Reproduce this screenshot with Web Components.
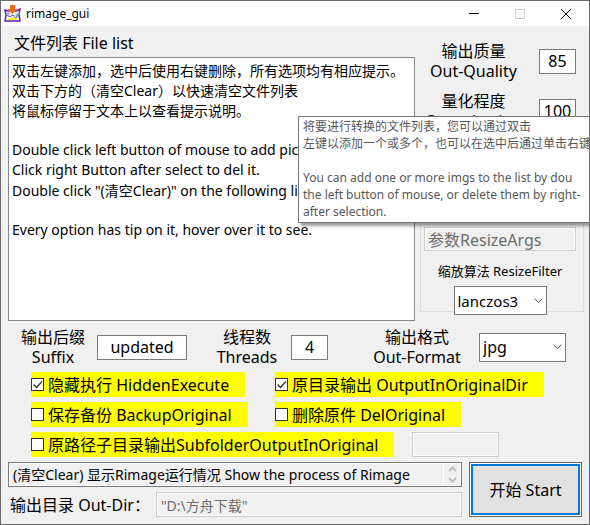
<!DOCTYPE html>
<html lang="zh-CN">
<head>
<meta charset="utf-8">
<title>rimage_gui</title>
<style>
  body {
    margin: 0;
    background: #f0f0f0;
    color: #000;
    font: 16px/20px "Noto Sans", "Noto Sans CJK SC", sans-serif;
  }
</style>
</head>
<body>
<rimage-app></rimage-app>

<script>
const BORDER = "#7a7a7a"
const BORDER_DISABLED = "#cccccc"

const BASE_STYLE = `
  * { box-sizing: border-box; }
  input, select, button {
    margin: 0;
    font: inherit;
    color: inherit;
    border-radius: 0;
    outline: none;
  }
`

class BaseElement extends HTMLElement {
  constructor() {
    super()
    this.attachShadow({ mode: "open" })
  }

  connectedCallback() {
    this.shadowRoot.innerHTML = `<style>${BASE_STYLE}</style>${this.render()}`
  }

  attr(name, defVal = "") {
    return this.hasAttribute(name) ? this.getAttribute(name) : defVal
  }
}

function selectMarkup(el) {
  /* Return a flat drop-down with its chevron laid in the same grid cell. */
  return `
    <style>
      .drop { display: grid; align-items: center; }
      .drop > * { grid-area: 1 / 1; }
      .drop select {
        appearance: none;
        width: ${el.attr("width")}px;
        height: ${el.attr("height", "29")}px;
        padding: 0 3px;
        border: 1px solid ${BORDER};
        background: #fff;
      }
      .drop svg { justify-self: end; margin-right: 4px; pointer-events: none; }
    </style>
    <div class="drop">
      <select id="control">
        ${el.attr("options").split(",").map(o => `<option>${o}</option>`).join("")}
      </select>
      <svg width="9" height="6"><path d="M.5.5l4 4 4-4" fill="none" stroke="#606060"/></svg>
    </div>
  `
}

class AppWindow extends BaseElement {
  render() {
    return `
      <style>
        :host {
          display: flex;
          flex-direction: column;
          position: relative;
          min-height: 100vh;
          box-sizing: border-box;
          border: 1px solid #6b696b;
          overflow: hidden;
        }
        header {
          display: flex;
          align-items: center;
          height: 25px;
          padding-left: 3px;
          background: #fff;
          font-size: 12px;
        }
        h1 { flex: 1; margin: 0 0 0 5px; font: inherit; }
        header button {
          width: 46px;
          height: 25px;
          padding: 0;
          border: 0;
          background: none;
        }
        button svg { display: block; margin: auto; }
        main { flex: 1; padding: 6px 5px 6px 7px; }
      </style>
      <header>
        <svg width="17" height="17" viewBox="0 0 17 17">
          <path d="M1 5l3 1h9l3-2-1 5 1 7H1l1-6z" fill="#fff" stroke="#5a20b8" stroke-width="1.5"/>
          <path d="M2 8l3-2 2 3 4 0 3-3 1 3-2 2H4z" fill="#c9e6f2"/>
          <path d="M3 10l3 2 3-2 3 3 3-4" fill="none" stroke="#6d55d0"/>
          <path d="M3 8l2 1M3 6l3 1" stroke="#e6408f"/>
          <path d="M3 15q2-3 5-2 3-2 6 2z" fill="#f0ee28"/>
          <path d="M13 9v3" stroke="#36a852"/>
          <path d="M6 0h5v4h3L8.500 9 3 4h3z" fill="#ee6a17"/>
        </svg>
        <h1><slot name="title"></slot></h1>
        <button aria-label="Minimize">
          <svg width="10" height="10"><path d="M0 4.500h10" stroke="#000"/></svg>
        </button>
        <button aria-label="Maximize" disabled>
          <svg width="10" height="10"><path d="M.5.5h9v9h-9z" fill="none" stroke="#ccc"/></svg>
        </button>
        <button aria-label="Close">
          <svg width="10" height="10"><path d="M0 0l10 10M10 0L0 10" stroke="#000"/></svg>
        </button>
      </header>
      <main><slot></slot></main>
      <slot name="tip"></slot>
    `
  }
}

class ListBox extends BaseElement {
  render() {
    const options = this.attr("lines")
      .split("|")
      .map(line => `<option>${line}</option>`)
      .join("")
    return `
      <style>
        :host { display: flex; flex-direction: column; }
        label { padding-left: 6px; line-height: 22px; margin-bottom: 3px; }
        select {
          width: 100%;
          height: 264px;
          padding: 2px 2px;
          border: 1px solid #828790;
          background: #fff;
          font-size: 14px;
          overflow: hidden;
        }
        option {
          height: 20px;
          min-height: 20px;
          padding: 0 1px;
          line-height: 20px;
          white-space: pre;
        }
      </style>
      <label for="list"><slot></slot></label>
      <select id="list" size="13" multiple>${options}</select>
    `
  }
}

class FormField extends BaseElement {
  /* A two-line label beside a text box or, with "options", a drop-down. */
  render() {
    const control = this.hasAttribute("options")
      ? selectMarkup(this)
      : `<input id="control" value="${this.attr("value")}">`
    return `
      <style>
        :host { display: flex; align-items: center; gap: 12px; }
        label { width: ${this.attr("label-width", "64")}px; text-align: center; white-space: nowrap; }
        input {
          width: ${this.attr("width")}px;
          height: 25px;
          padding: 0;
          border: 1px solid ${BORDER};
          background: #fff;
          text-align: center;
        }
      </style>
      <label for="control"><slot></slot></label>
      ${control}
    `
  }
}

class ResizeGroup extends BaseElement {
  render() {
    return `
      <style>
        :host { display: block; }
        fieldset {
          display: flex;
          flex-direction: column;
          align-items: center;
          min-width: 0;
          height: 171px;
          margin: 0;
          padding: 85px 7px 0 3px;
          border: 1px solid #dcdcdc;
        }
        input {
          width: 100%;
          height: 25px;
          padding: 0 3px;
          border: 1px solid ${BORDER_DISABLED};
          box-shadow: inset 0 0 0 1px #fff;
          background: #f0f0f0;
          color: #6d6d6d;
        }
        label { margin: 10px 0 5px; font-size: 13px; white-space: nowrap; }
        .drop select { font-size: 15px; }
      </style>
      <fieldset>
        <input value="${this.attr("value")}" aria-label="ResizeArgs" disabled>
        <label for="control"><slot></slot></label>
        ${selectMarkup(this)}
      </fieldset>
    `
  }
}

class CheckOption extends BaseElement {
  render() {
    return `
      <style>
        :host { display: inline-flex; }
        label {
          display: flex;
          align-items: center;
          height: 25px;
          padding-right: 16px;
          background: #ff0;
          white-space: nowrap;
        }
        .box { display: grid; margin-right: 4px; }
        .box > * { grid-area: 1 / 1; }
        input {
          appearance: none;
          width: 13px;
          height: 13px;
          border: 1px solid #333;
          background: #fff;
        }
        svg { display: none; pointer-events: none; }
        input:checked + svg { display: block; }
      </style>
      <label>
        <span class="box">
          <input type="checkbox" ${this.hasAttribute("checked") ? "checked" : ""}>
          <svg width="13" height="13"><path d="M2.500 6.500l3 3 5.500-6" fill="none" stroke="#333" stroke-width="1.300"/></svg>
        </span>
        <slot></slot>
      </label>
    `
  }
}

class OutputPanel extends BaseElement {
  render() {
    return `
      <style>
        :host {
          display: grid;
          grid-template-columns: minmax(0, 1fr) 113px;
          gap: 7px;
        }
        .rows { display: grid; grid-template-columns: minmax(0, 1fr); gap: 5px; }
        .log {
          display: flex;
          height: 25px;
          border: 1px solid ${BORDER};
          box-shadow: inset 0 0 0 1px #fff;
        }
        .log input {
          flex: 1;
          min-width: 0;
          padding: 0 4px;
          border: 0;
          background: none;
          font-size: 14px;
        }
        .spin { display: flex; flex-direction: column; width: 18px; border-left: 1px solid #fff; }
        .spin button { flex: 1; padding: 0; border: 0; background: none; line-height: 0; }
        .dir { display: flex; align-items: center; gap: 6px; padding-left: 2px; }
        .dir label { white-space: nowrap; }
        .dir input {
          flex: 1;
          min-width: 0;
          height: 25px;
          padding: 0 4px;
          border: 1px solid ${BORDER_DISABLED};
          box-shadow: inset 0 0 0 1px #fff;
          background: #f0f0f0;
          color: #6d6d6d;
          font-size: 14px;
        }
        .start {
          border: 1px solid #646464;
          padding: 1px;
          background: #fff;
        }
        .start span {
          display: grid;
          place-content: center;
          height: 100%;
          border: 2px solid #0078d7;
          background: #e1e1e1;
        }
        .start ::slotted(span) { border: 0; }
      </style>
      <div class="rows">
        <div class="log">
          <input value="${this.attr("log")}" aria-label="Log" readonly>
          <div class="spin">
            <button aria-label="Up"><svg width="9" height="6"><path d="M1 5l3.500-3.500L8 5" fill="none" stroke="#bfbfbf" stroke-width="2"/></svg></button>
            <button aria-label="Down"><svg width="9" height="6"><path d="M1 1l3.500 3.500L8 1" fill="none" stroke="#bfbfbf" stroke-width="2"/></svg></button>
          </div>
        </div>
        <div class="dir">
          <label for="dir"><slot></slot></label>
          <input id="dir" value="${this.attr("dir-value").replace(/"/g, "&quot;")}" disabled>
        </div>
      </div>
      <button class="start"><span><slot name="start"></slot></span></button>
    `
  }
}

class HoverTip extends BaseElement {
  render() {
    return `
      <style>
        :host {
          position: absolute;
          left: 297px;
          top: 115px;
          width: 340px;
          box-sizing: border-box;
          padding: 1px 4px 2px;
          border: 1px solid #767676;
          background: #fff;
          box-shadow: 3px 3px 3px rgba(0, 0, 0, .4);
          color: #575757;
          font-size: 12px;
          line-height: 17px;
        }
        slot { white-space: pre; }
      </style>
      <slot></slot>
    `
  }
}

class RimageApp extends BaseElement {
  render() {
    return `
      <style>
        :host { display: block; }
        .top { display: grid; grid-template-columns: 1fr 164px; gap: 5px; }
        .side { display: flex; flex-direction: column; padding-top: 9px; }
        .side form-field { margin-bottom: 10px; }
        .fields {
          display: grid;
          grid-template-columns: 194px 152px auto;
          align-items: center;
          padding: 6px 0 5px 13px;
        }
        .checks {
          display: grid;
          grid-template-columns: 244px auto;
          gap: 5px 0;
          justify-items: start;
          padding-left: 23px;
        }
        .sub { grid-column: 1 / 3; display: flex; gap: 18px; }
        .sub input {
          width: 87px;
          border: 1px solid ${BORDER_DISABLED};
          box-shadow: inset 0 0 0 1px #fff;
          background: #f0f0f0;
        }
        output-panel { margin: 5px 2px 0 0; }
      </style>
      <app-window>
        <span slot="title">rimage_gui</span>
        <div class="top">
          <list-box lines="双击左键添加，选中后使用右键删除，所有选项均有相应提示。|双击下方的（清空Clear）以快速清空文件列表|将鼠标停留于文本上以查看提示说明。||Double click left button of mouse to add pictures.|Click right Button after select to del it.|Double click &quot;(清空Clear)&quot; on the following list.||Every option has tip on it, hover over it to see.">文件列表 File list</list-box>
          <div class="side">
            <form-field label-width="107" width="37" value="85">输出质量<br>Out-Quality</form-field>
            <form-field label-width="107" width="37" value="100">量化程度<br>Quantization</form-field>
            <resize-group value="参数ResizeArgs" options="lanczos3" width="93">缩放算法 ResizeFilter</resize-group>
          </div>
        </div>
        <div class="fields">
          <form-field width="90" value="updated">输出后缀<br>Suffix</form-field>
          <form-field width="37" value="4">线程数<br>Threads</form-field>
          <form-field label-width="100" width="87" options="jpg">输出格式<br>Out-Format</form-field>
        </div>
        <div class="checks">
          <check-option checked>隐藏执行 HiddenExecute</check-option>
          <check-option checked>原目录输出 OutputInOriginalDir</check-option>
          <check-option>保存备份 BackupOriginal</check-option>
          <check-option>删除原件 DelOriginal</check-option>
          <div class="sub">
            <check-option>原路径子目录输出SubfolderOutputInOriginal</check-option>
            <input aria-label="Subfolder" disabled>
          </div>
        </div>
        <output-panel log="(清空Clear) 显示Rimage运行情况 Show the process of Rimage" dir-value='"D:\\方舟下载"'>输出目录 Out-Dir：<span slot="start">开始 Start</span></output-panel>
        <hover-tip slot="tip">将要进行转换的文件列表，您可以通过双击
左键以添加一个或多个，也可以在选中后通过单击右键

You can add one or more imgs to the list by dou
the left button of mouse, or delete them by right-
after selection.</hover-tip>
      </app-window>
    `
  }
}

customElements.define("app-window", AppWindow)
customElements.define("list-box", ListBox)
customElements.define("form-field", FormField)
customElements.define("resize-group", ResizeGroup)
customElements.define("check-option", CheckOption)
customElements.define("output-panel", OutputPanel)
customElements.define("hover-tip", HoverTip)
customElements.define("rimage-app", RimageApp)
</script>
</body>
</html>
